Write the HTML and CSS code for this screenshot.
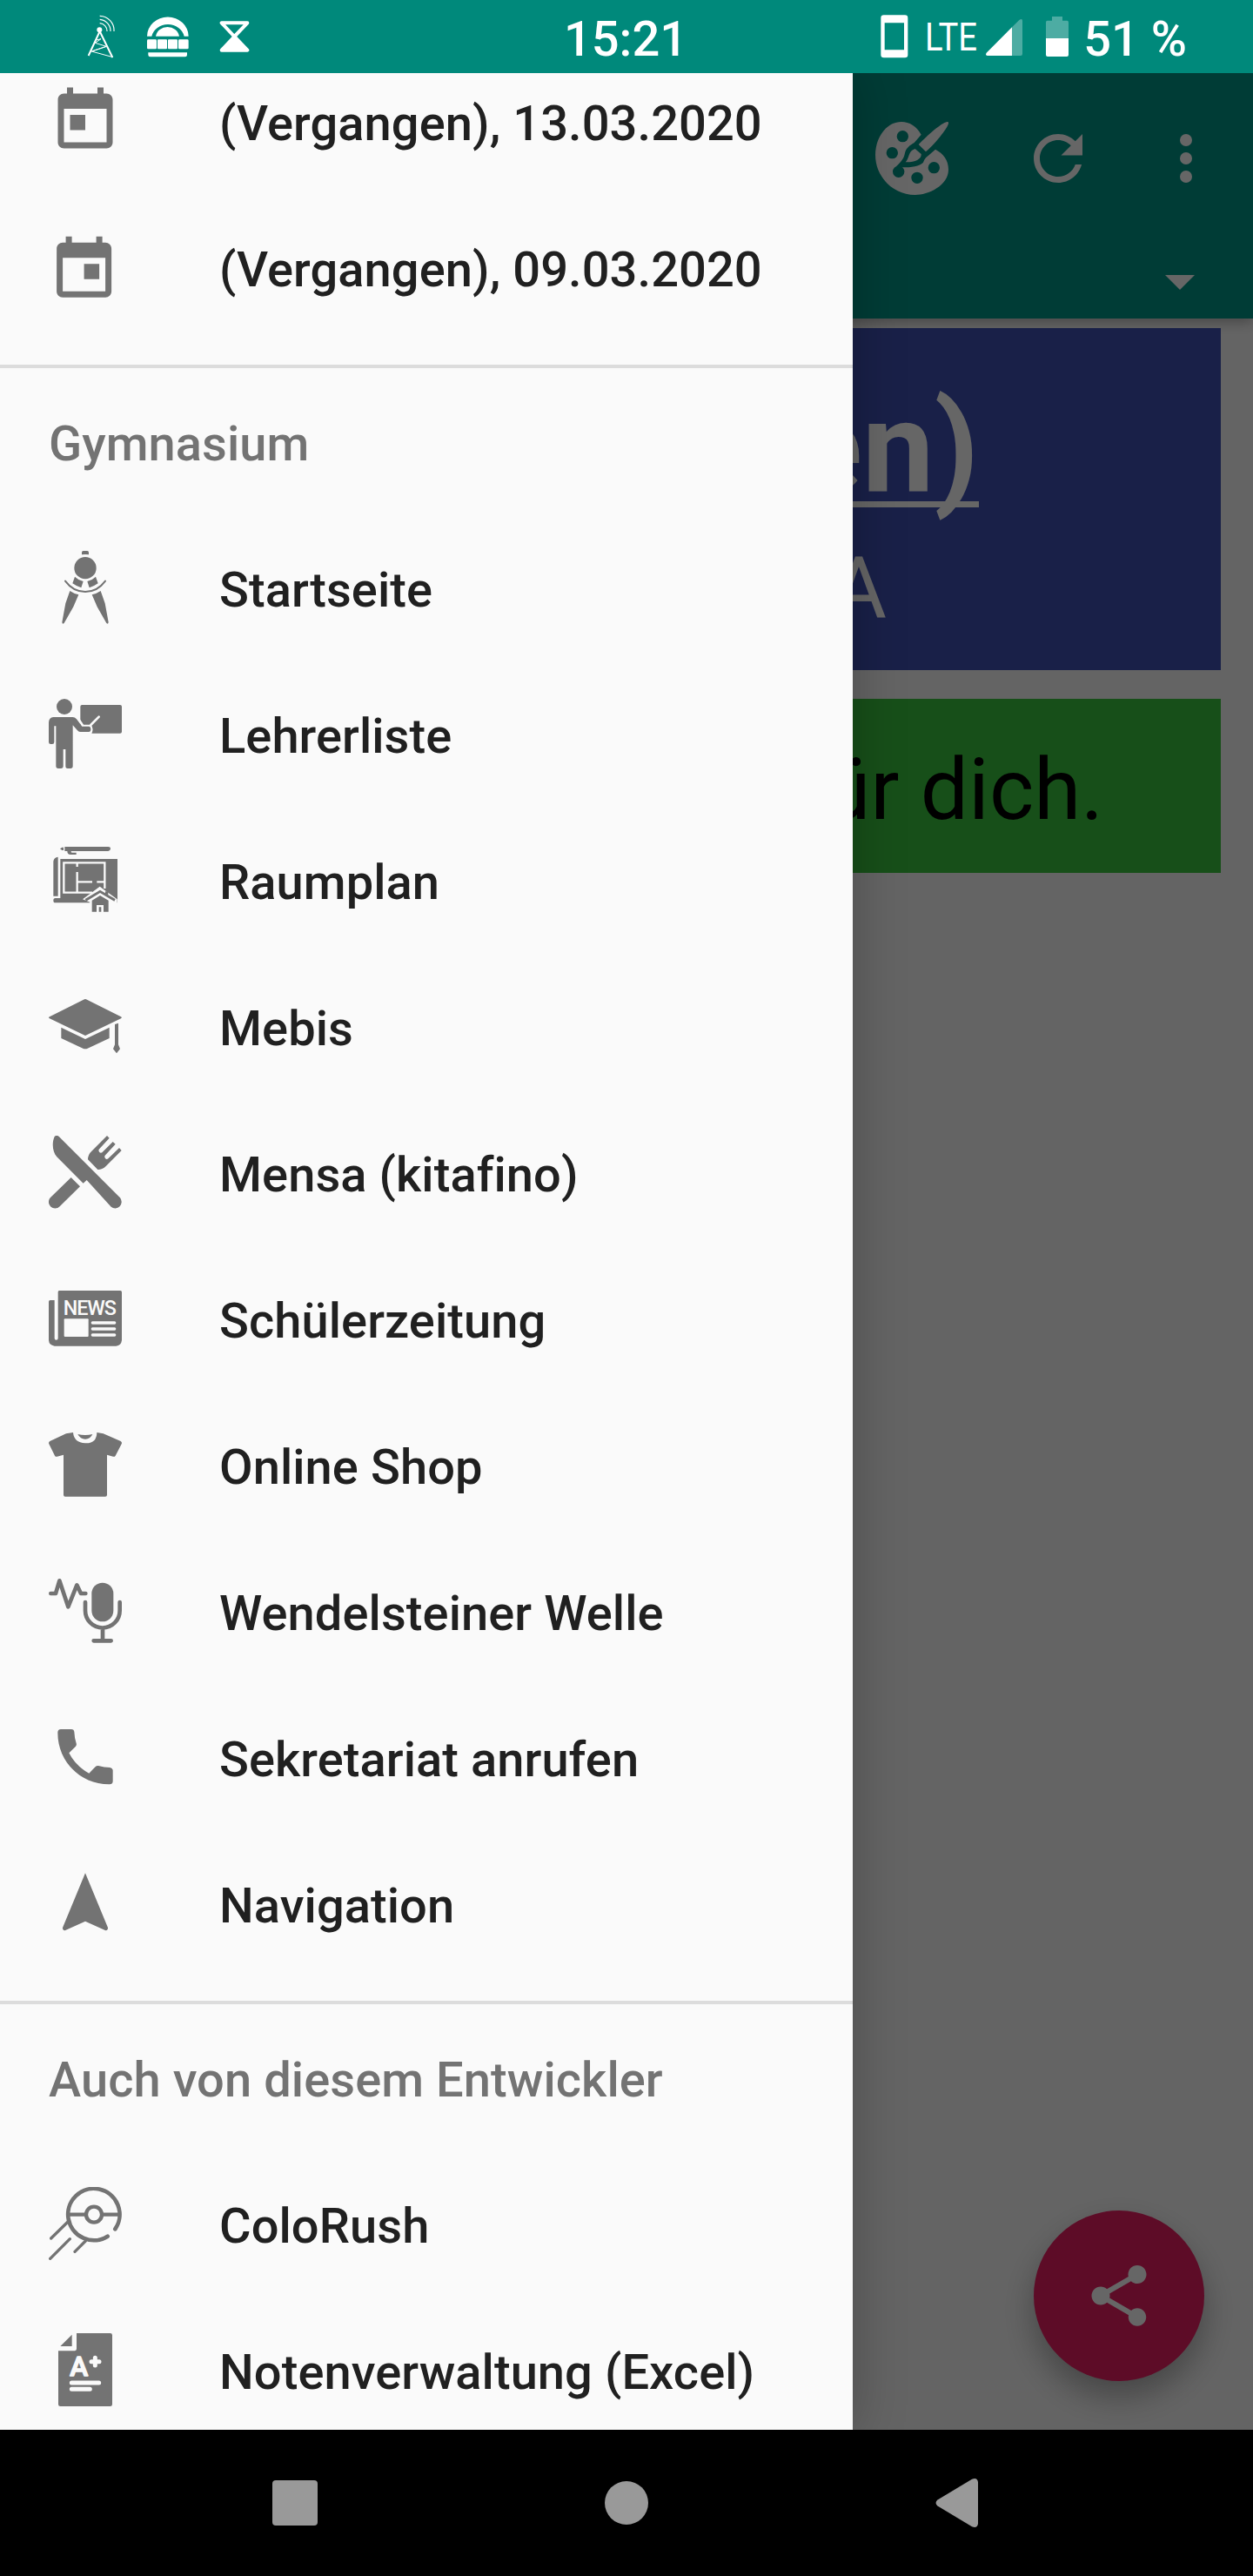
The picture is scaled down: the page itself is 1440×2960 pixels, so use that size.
FILE: index.html
```html
<!DOCTYPE html>
<html lang="de">
<head>
<meta charset="utf-8">
<title>Vertretungsplan</title>
<link rel="stylesheet" href="styles.css">
</head>
<body>
<div class="screen">
  <header class="status">
    <div class="status-left">
      <svg class="s-tower" width="32" height="50" viewBox="299 51 96 150" fill="none" stroke="#fff">
        <path d="M343 108L304 192M343 108L387 198" stroke-width="6"/>
        <path d="M331 138L347 134L327 148L366 160L315 177L388 197M315 177L366 160" stroke-width="3"/>
        <circle cx="342" cy="103" r="9" fill="#fff" stroke="none"/>
        <path d="M343 80A27 27 0 0 1 368 108M343 67A40 40 0 0 1 380 108M343 55A50 50 0 0 1 392 108" stroke-width="3.5"/>
      </svg>
      <svg class="s-burger" width="48" height="48" viewBox="507 56 144 144" fill="#fff">
        <path d="M507 124A71 66 0 0 1 650 124H635A57 50 0 0 0 523 124Z"/>
        <path d="M537 124A41 38 0 0 1 618 124Z"/>
        <rect x="507" y="135" width="33" height="33" rx="4"/><rect x="543" y="135" width="33" height="33" rx="3"/><rect x="579" y="135" width="33" height="33" rx="3"/><rect x="615" y="135" width="35" height="33" rx="4"/>
        <path d="M511 180H645V188Q645 195 638 195H518Q511 195 511 188Z"/>
      </svg>
      <svg width="35" height="36" viewBox="756 73 105 108" stroke="#fff" stroke-width="12" stroke-linejoin="round">
        <path d="M764 80H853L808 127Z" fill="none"/>
        <path d="M808 127L853 174H764Z" fill="#fff"/>
      </svg>
    </div>
    <div class="clock">15:21</div>
    <div class="status-right">
      <svg class="s-phone" width="32" height="50" viewBox="157 51 96 150"><path fill="#fff" fill-rule="evenodd" d="M168 52H241Q251 52 251 62V189Q251 199 241 199H168Q158 199 158 189V62Q158 52 168 52ZM171 79V172H238V79Z"/></svg>
      <svg class="s-lte" width="60" height="50" viewBox="0 0 60 50"><text x="-1" y="40.500" textLength="60" lengthAdjust="spacingAndGlyphs">LTE</text></svg>
      <svg class="s-signal" width="42" height="42" viewBox="519 66 126 126" fill="#fff">
        <path opacity=".3" d="M609 94L634 69Q645 62 645 72V186Q645 192 639 192H609Z"/>
        <path d="M609 94V192H524Q516 190 521 182Z"/>
      </svg>
      <svg class="s-battery" width="26" height="46" viewBox="726 57 78 138" fill="#fff">
        <path opacity=".3" d="M747 57H783V71H799Q804 71 804 77V132H726V77Q726 71 731 71H747Z"/>
        <path d="M726 132H804V189Q804 195 798 195H732Q726 195 726 189Z"/>
      </svg>
      <span class="percent">51 %</span>
    </div>
  </header>

  <main class="app">
    <div class="appbar">
      <div class="toolbar">
        <svg class="icon palette" viewBox="138 420 252 252">
          <path fill="#fff" d="M296 464L272 492C258 500 244 510 240 527C236 550 222 562 208 575L232 577C262 577 290 574 303 560C309 545 314 542 320 537L345 515C372 530 390 550 390 585C390 640 320 672 275 672C200 672 138 610 138 535C138 475 175 420 228 420C255 420 280 435 296 464Z"/>
          <path fill="#fff" d="M275 513L296 531C298 547 276 560 242 559C256 545 250 521 275 513ZM287 498L312 523C340 500 385 445 390 426Q391 419 385 420C365 424 320 465 287 498Z"/>
          <g fill="#009688"><circle cx="232" cy="470" r="20"/><circle cx="196" cy="527" r="20"/><circle cx="218" cy="592" r="20"/><circle cx="282" cy="613" r="20"/><circle cx="340" cy="578" r="20"/></g>
        </svg>
        <svg class="icon refresh" viewBox="0 0 24 24" fill="#fff"><path d="M17.650 6.350C16.200 4.900 14.210 4 12 4c-4.420 0-7.990 3.580-7.990 8s3.570 8 7.990 8c3.730 0 6.840-2.550 7.730-6h-2.080c-.82 2.330-3.040 4-5.650 4-3.310 0-6-2.690-6-6s2.690-6 6-6c1.660 0 3.140.69 4.220 1.780L13 11h7V4l-2.350 2.350z"/></svg>
        <svg class="icon more" viewBox="0 0 24 24" fill="#fff"><circle cx="12" cy="6" r="2"/><circle cx="12" cy="12" r="2"/><circle cx="12" cy="18" r="2"/></svg>
      </div>
      <div class="spinner"><svg width="34" height="17" viewBox="0 0 34 17"><path fill="#fff" d="M0 0H34L17 17Z"/></svg></div>
    </div>
    <section class="plan">
      <div class="card day">
        <h1>en)</h1>
        <p>A</p>
      </div>
      <div class="card info">ür dich.</div>
    </section>
    <div class="fab"><svg class="icon" viewBox="0 0 24 24" fill="#fff"><path d="M18 16.080c-.76 0-1.440.3-1.960.77L8.910 12.700c.05-.23.09-.46.09-.7s-.04-.47-.09-.7l7.050-4.110c.54.5 1.250.81 2.040.81 1.660 0 3-1.340 3-3s-1.340-3-3-3-3 1.340-3 3c0 .24.04.47.09.7L8.040 9.810C7.500 9.310 6.790 9 6 9c-1.660 0-3 1.340-3 3s1.340 3 3 3c.79 0 1.500-.31 2.040-.81l7.120 4.160c-.05.21-.08.43-.08.65 0 1.610 1.310 2.920 2.920 2.920 1.610 0 2.920-1.310 2.920-2.920s-1.310-2.920-2.920-2.920z"/></svg></div>
    <div class="scrim"></div>

    <nav class="drawer">
      <ul class="group first">
        <li>
          <svg class="icon" viewBox="0 0 24 24"><path d="M19 3h-1V1h-2v2H8V1H6v2H5c-1.110 0-1.990.9-1.990 2L3 19c0 1.100.89 2 2 2h14c1.100 0 2-.9 2-2V5c0-1.100-.9-2-2-2zm0 16H5V8h14v11zM7 10h5v5H7z"/></svg>
          <span>(Vergangen), 13.03.2020</span>
        </li>
        <li>
          <svg class="icon" viewBox=".4 -.9 24 24"><path d="M19 3h-1V1h-2v2H8V1H6v2H5c-1.110 0-1.990.9-1.990 2L3 19c0 1.100.89 2 2 2h14c1.100 0 2-.9 2-2V5c0-1.100-.9-2-2-2zm0 16H5V8h14v11zM12 10h5v5h-5z"/></svg>
          <span>(Vergangen), 09.03.2020</span>
        </li>
      </ul>
      <h2>Gymnasium</h2>
      <ul class="group">
        <li>
          <svg class="icon" viewBox="78 69 252 252">
            <path d="M192 82V74Q192 69 197 69H211Q216 69 216 74V82Q204 80 192 82Z"/>
            <circle cx="204" cy="128" r="38"/>
            <path d="M168 158Q180 170 197 174L190 196Q174 191 160 181ZM240 158Q228 170 211 174L218 196Q234 191 248 181ZM151 207Q164 216 181 220L163 262L131 318Q125 324 124 315L136 250ZM257 207Q244 216 227 220L245 262L277 318Q283 324 284 315L272 250Z"/>
            <path d="M135 173Q162 210 204 210T273 173" fill="none" stroke="#737373" stroke-width="6" stroke-linecap="round"/>
          </svg>
          <span>Startseite</span>
        </li>
        <li>
          <svg class="icon" viewBox="78 573 252 252">
            <rect x="187" y="600" width="143" height="98" rx="6"/>
            <path d="M180 648L196 672H222M223 669L251 641" fill="none" stroke="#fafafa" stroke-width="8" stroke-linecap="round"/>
            <path d="M182 669H224Q234 682 226 700H180Z" fill="#fafafa"/>
            <circle cx="132" cy="606" r="27"/>
            <path d="M94 642H160Q168 642 174 649L193 674H216Q223 675 223 684T216 693H186Q181 693 177 688L161 670V811Q161 819 153 819H143Q136 819 136 811V753H128V811Q128 819 120 819H111Q103 819 103 811V673H97V728Q97 735 90 735H85Q78 735 78 728V660Q79 644 94 642Z"/>
          </svg>
          <span>Lehrerliste</span>
        </li>
        <li>
          <svg class="icon" viewBox="78 57 252 252">
            <path d="M117 76L124 71H129V81H124ZM133 69H283Q291 69 291 76T283 84H155Q154 89 158 89H173V96H153Q142 96 142 84H133Z"/>
            <path d="M94 239V119Q96 105 110 104V239ZM118 111H315V262H101Q94 262 94 254T101 246H118Z"/>
            <g fill="none" stroke="#fafafa" stroke-width="7"><path d="M228 227H130V124H271V213M176 124V138M176 156V227M176 190H228M244 190H271"/></g>
            <path d="M195 250L254 206L314 250V300H220V260Z" fill="#fafafa"/>
            <path d="M203 249L255 218L273 229V223H283V235L308 249L304 257L255 228L207 257Z"/>
            <path d="M227 293V254L255 237L284 254V293H267V270H243V293ZM251 277H259V293H251Z"/>
          </svg>
          <span>Raumplan</span>
        </li>
        <li>
          <svg class="icon" viewBox="78 561 252 252">
            <path d="M198 596Q204 592 210 596L327 655Q332 658 327 661L204 720L81 661Q75 658 81 655ZM121 692L204 732L287 692V729L212 764Q204 767 196 764L121 729ZM306 681L318 677V751L324 766L312 781L300 766L306 751Z"/>
          </svg>
          <span>Mebis</span>
        </li>
        <li>
          <svg class="icon" viewBox="78 75 252 252">
            <path d="M102 75Q109 73 114 79L324 289A22 22 0 0 1 293 320L209 228L197 239L106 148C91 132 88 100 98 78ZM155 219L186 250L116 319A22 22 0 0 1 84 288ZM279 75L287 83L251 122Q249 128 253 132T262 133L299 96L308 104L272 143Q269 148 273 153T283 154L321 117L329 126L276 179Q263 192 247 192L213 157Q213 140 226 128Z"/>
          </svg>
          <span>Mensa (kitafino)</span>
        </li>
        <li>
          <svg class="icon" viewBox="78 579 252 252">
            <path d="M114 609H325Q330 609 330 614V780Q328 798 310 800H98Q79 797 78 780V647Q78 642 83 642H98V773Q98 779 104 779T110 773V614Q110 609 114 609Z"/>
            <text class="news" x="128" y="692" textLength="184" lengthAdjust="spacing">NEWS</text>
            <rect x="131" y="706" width="84" height="62" rx="3" fill="#fafafa"/>
            <path d="M229 720H305M229 741H305M229 762H305" stroke="#fafafa" stroke-width="10" stroke-linecap="round"/>
          </svg>
          <span>Schülerzeitung</span>
        </li>
        <li>
          <svg class="icon" viewBox="78 63 252 252">
            <path d="M162 78Q165 113 204 115T244 78L266 82L326 108Q332 112 329 118L308 158Q305 163 300 161L279 155V293Q279 299 273 299H135Q129 299 129 293V155L107 161Q102 163 99 158L79 118Q76 112 82 108L138 82ZM178 84Q204 90 229 84Q221 101 204 101T178 84Z"/>
          </svg>
          <span>Online Shop</span>
        </li>
        <li>
          <svg class="icon" viewBox="78 567 252 252">
            <rect x="226" y="596" width="75" height="134" rx="37.500"/>
            <g fill="none" stroke="#737373" stroke-width="14" stroke-linecap="round" stroke-linejoin="round"><path d="M85 633H102L115 589L145 679L175 604L189 633H205M204 663V692A59 59 0 0 0 323 692V663M264 754V795M233 796H293"/></g>
          </svg>
          <span>Wendelsteiner Welle</span>
        </li>
        <li>
          <svg class="icon" viewBox="78 51 252 252">
            <path d="M120 81H156Q165 81 166 90Q167 112 173 130Q175 135 171 140L148 163Q171 208 217 233L240 209Q244 206 249 207Q270 213 289 213Q298 214 299 223V261Q298 271 288 271C188 272 108 192 109 92Q109 82 120 81Z"/>
          </svg>
          <span>Sekretariat anrufen</span>
        </li>
        <li>
          <svg class="icon" viewBox="78 555 252 252">
            <path d="M204 577L282 765Q283 774 274 775L204 743L134 775Q125 774 126 765Z"/>
          </svg>
          <span>Navigation</span>
        </li>
      </ul>
      <h2>Auch von diesem Entwickler</h2>
      <ul class="group">
        <li>
          <svg class="icon" viewBox="78 99 252 252">
            <g fill="none" stroke="#737373" stroke-linecap="round">
              <path d="M307 244A89 89 0 1 0 281 269" stroke-width="14"/>
              <circle cx="234" cy="194" r="27" stroke-width="13"/>
              <path d="M146 194H205M263 194H322" stroke-width="13" stroke-linecap="butt"/>
              <path d="M144 219L86 276M205 285L168 322M151 278L83 346" stroke-width="10"/>
            </g>
          </svg>
          <span>ColoRush</span>
        </li>
        <li>
          <svg class="icon" viewBox="78 603 252 252">
            <path d="M158 608V648H118ZM174 603H290Q297 603 297 610V848Q297 855 290 855H118Q111 855 111 848V664H168Q174 663 174 657Z"/>
            <text class="grade" x="151" y="750" textLength="63" lengthAdjust="spacingAndGlyphs">A</text>
            <path d="M238 688V714M225 701H252M157 774H251M157 796H220" stroke="#fafafa" stroke-width="15" stroke-linecap="round"/>
          </svg>
          <span>Notenverwaltung (Excel)</span>
        </li>
      </ul>
    </nav>
  </main>

  <footer class="navbar">
    <svg width="56" height="56" viewBox="0 0 56 56"><rect x="2" y="2" width="52" height="52" rx="4"/></svg>
    <svg width="56" height="56" viewBox="0 0 56 56"><circle cx="28" cy="28" r="25"/></svg>
    <svg width="56" height="56" viewBox="0 0 56 56"><path d="M4.500 24.500L44 .8Q50-1.500 51 4V52Q50 57.500 44 55.200L4.500 31.500Q.5 28 4.500 24.500Z"/></svg>
  </footer>
</div>
</body>
</html>
```
FILE: styles.css
```css
* { box-sizing: border-box; }

body, h1, h2, p, ul { margin: 0; padding: 0; }

body { font-family: Roboto, "Noto Sans", sans-serif; }

svg { display: block; flex: none; }

.icon { width: 84px; height: 84px; }

.screen {
  display: flex;
  flex-direction: column;
  width: 1440px;
  height: 2960px;
  overflow: hidden;
}

/* Status bar */
.status {
  display: grid;
  grid-template-columns: 1fr auto 1fr;
  height: 84px;
  background: #00897b;
  color: #fff;
  font-size: 56px;
  font-weight: 500;
  line-height: 90px;
  white-space: pre;
}

.status-left, .status-right { display: flex; align-items: flex-start; }
.status-left { padding-left: 100px; }
.status-left svg { margin-top: 24px; }
.status-left .s-tower { margin: 17px 37px 0 0; }
.status-left .s-burger { margin: 19px 35px 0 0; }
.clock { padding-right: 2px; }

.status-right { justify-content: flex-end; padding-right: 76px; }
.s-phone { margin: 17px 20px 0 0; }
.s-lte { margin: 17px 9px 0 0; fill: #fff; font-size: 43.500px; font-weight: 400; overflow: visible; }
.s-signal { margin: 22px 27px 0 0; }
.s-battery { margin: 19px 17px 0 0; }

/* App behind the drawer */
.app {
  position: relative;
  flex: 1;
  overflow: hidden;
  background: #fafafa;
}

.appbar {
  height: 282px;
  background: #009688;
  box-shadow: 0 4px 14px rgba(0, 0, 0, .3);
}

.toolbar {
  display: flex;
  align-items: center;
  justify-content: flex-end;
  height: 196px;
  padding-right: 35px;
}
.palette { margin-right: 84px; }
.refresh { margin-right: 63px; }

.spinner {
  display: flex;
  justify-content: flex-end;
  padding: 36px 67px 0 0;
}

.plan {
  display: flex;
  flex-direction: column;
  gap: 33px;
  padding: 11px 37px 0;
}

.day {
  height: 393px;
  padding-top: 52px;
  background: #3f51b5;
  color: #fff;
}
.day h1 {
  padding-right: 278px;
  font-size: 147px;
  font-weight: 700;
  line-height: 172px;
  text-align: right;
  text-decoration: underline 7px;
  text-underline-offset: 11px;
  text-decoration-skip-ink: none;
}
.day p {
  margin-top: 17px;
  padding-right: 384px;
  font-size: 98px;
  line-height: 115px;
  text-align: right;
}

.info {
  height: 200px;
  padding: 47px 135px 0 0;
  background: #3ac63f;
  color: #000;
  font-size: 98px;
  line-height: 115px;
  text-align: right;
}

.fab {
  position: absolute;
  right: 56px;
  bottom: 56px;
  display: flex;
  align-items: center;
  justify-content: center;
  width: 196px;
  height: 196px;
  border-radius: 50%;
  background: #e91e63;
  box-shadow: 0 18px 36px rgba(0, 0, 0, .3);
}

.scrim {
  position: absolute;
  inset: 0;
  background: rgba(0, 0, 0, .6);
}

/* Navigation drawer */
.drawer {
  position: absolute;
  top: 0;
  bottom: 0;
  left: 0;
  width: 980px;
  background: #fafafa;
  box-shadow: 0 0 56px rgba(0, 0, 0, .25);
  font-size: 56px;
  font-weight: 500;
  letter-spacing: .08px;
}

.drawer .first { margin-top: -26px; }

.drawer li {
  display: flex;
  align-items: center;
  gap: 112px;
  height: 168px;
  padding-left: 56px;
  color: #202020;
  line-height: 66px;
}
.drawer li .icon { margin-bottom: 6px; fill: #737373; }

.drawer h2 {
  height: 175px;
  margin-top: 25px;
  padding: 54px 0 0 56px;
  border-top: 4px solid #dcdcdc;
  color: #737373;
  font-size: 56px;
  font-weight: 500;
  line-height: 66px;
}

.drawer .news { fill: #fafafa; font-size: 70px; font-weight: 500; }
.drawer .grade {
  fill: #fafafa;
  stroke: #fafafa;
  stroke-width: 4px;
  stroke-linejoin: round;
  font-size: 92px;
  font-weight: 500;
}

/* System navigation */
.navbar {
  display: flex;
  justify-content: center;
  align-items: center;
  gap: 325px;
  height: 168px;
  background: #000;
  fill: #999;
}
```
